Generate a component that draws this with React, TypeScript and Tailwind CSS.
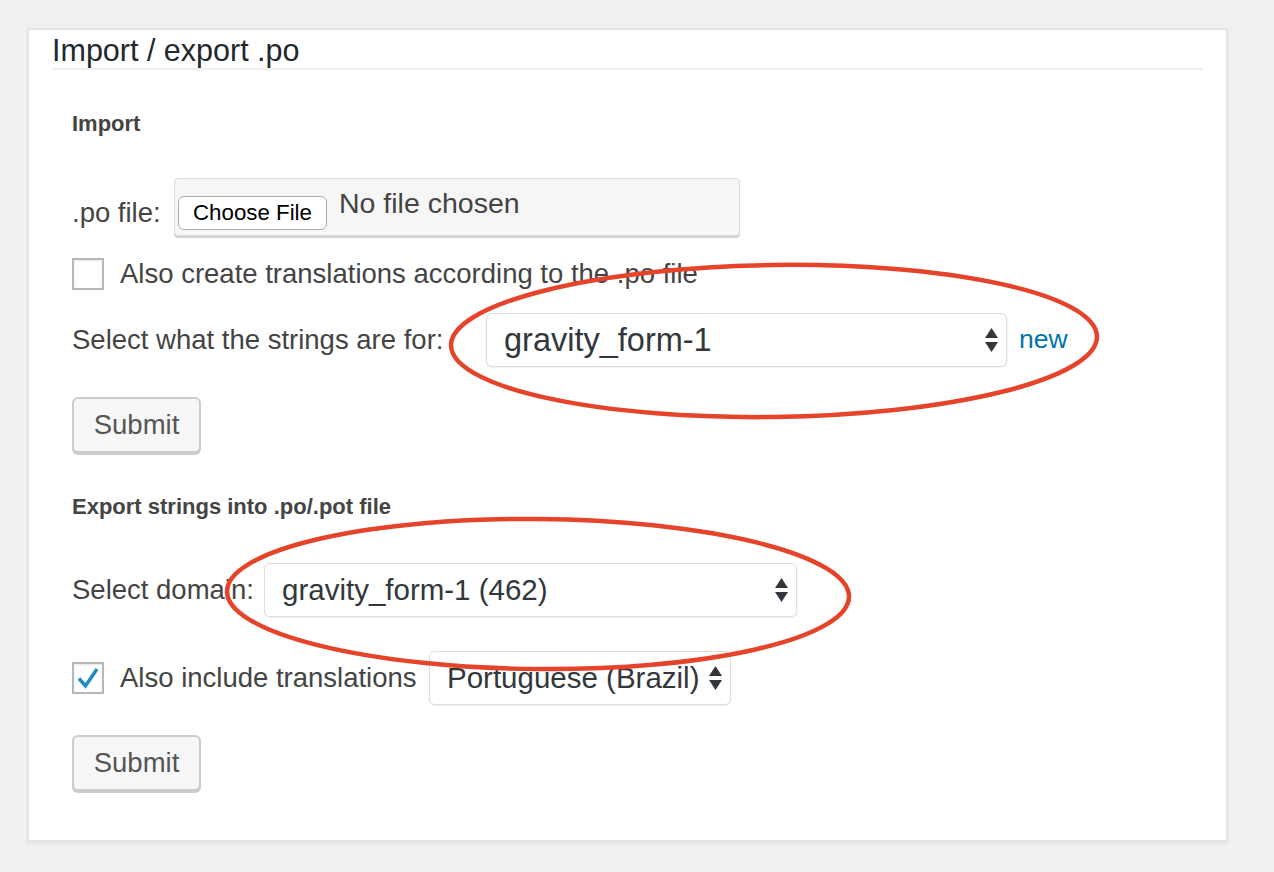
import React from 'react'

function Arrows() {
  return (
    <svg width="13" height="24" viewBox="0 0 13 24" className="shrink-0">
      <path d="M6.5 0 L13 10 L0 10 Z" fill="#32373c" />
      <path d="M0 14 L13 14 L6.5 24 Z" fill="#32373c" />
    </svg>
  )
}

function Select({ value, width, size }: { value: string; width: string; size: string }) {
  return (
    <div
      className={`flex h-[54px] ${width} items-center justify-between rounded-[6px] border border-[#dcdcdc] bg-white pl-[17px] pr-[8px] text-[#32373c] shadow-[0_1px_2px_rgba(0,0,0,0.07)] ${size}`}
    >
      <span>{value}</span>
      <Arrows />
    </div>
  )
}

function Checkbox({ checked }: { checked?: boolean }) {
  return (
    <div className="flex h-[32px] w-[32px] shrink-0 items-center justify-center border-2 border-[#b4b9be] bg-white shadow-[inset_0_1px_2px_rgba(0,0,0,0.1)]">
      {checked && (
        <svg width="24" height="24" viewBox="0 0 24 24">
          <path d="M3 12.5 L9.5 20 L21 3" fill="none" stroke="#1e8cbe" strokeWidth="3.5" strokeLinejoin="miter" />
        </svg>
      )}
    </div>
  )
}

function SubmitButton() {
  return (
    <button className="h-[56px] w-[129px] rounded-[6px] border-2 border-[#cccccc] bg-[#f7f7f7] text-[27.5px] text-[#555] shadow-[0_2px_0_#cccccc]">
      Submit
    </button>
  )
}

export default function App() {
  return (
    <div
      className="relative min-h-[872px] bg-[#f1f1f1] pl-[27px] pt-[28px]"
      style={{ fontFamily: '"Liberation Sans", Arial, sans-serif' }}
    >
      <div className="w-[1201px] border-2 border-[#e5e5e5] bg-white shadow-[0_2px_3px_rgba(0,0,0,0.05)]">
        <div className="mx-[23px] border-b-2 border-[#eeeeee] pt-[2px]">
          <h2 className="text-[30.5px] leading-[36px] text-[#23282d]">Import / export .po</h2>
        </div>

        <div className="flex flex-col pb-[49px] pl-[43px] text-[27.5px] text-[#444]">
          <h3 className="mt-[41px] text-[22px] font-bold leading-[26px] text-[#444]">Import</h3>

          <div className="mt-[41px] flex h-[58px] items-center">
            <span className="mt-[12px] w-[102px]">.po file:</span>
            <div className="flex h-[58px] w-[566px] items-start rounded-[4px] border border-[#dddddd] bg-[#f6f6f6] pl-[3px] shadow-[0_2px_0_#d2d2d2]">
              <div className="mt-[17px] flex h-[34px] w-[149px] items-center justify-center rounded-[6px] border border-[#a9a9a9] bg-white text-[22.3px] text-black">
                Choose File
              </div>
              <span className="ml-[12px] mt-[6px] text-[28.5px] leading-[36px] text-[#444]">No file chosen</span>
            </div>
          </div>

          <div className="mt-[22px] flex h-[32px] items-center">
            <Checkbox />
            <span className="ml-[16px]">Also create translations according to the .po file</span>
          </div>

          <div className="mt-[23px] flex items-center">
            <span className="w-[414px]">Select what the strings are for:</span>
            <Select value="gravity_form-1" width="w-[521px]" size="text-[32.5px]" />
            <a className="ml-[12px] text-[26.5px] text-[#0073aa]">new</a>
          </div>

          <div className="mt-[30px]">
            <SubmitButton />
          </div>

          <h3 className="mt-[41px] text-[22px] font-bold leading-[26px] text-[#444]">Export strings into .po/.pot file</h3>

          <div className="mt-[43px] flex items-center">
            <span className="w-[192px]">Select domain:</span>
            <Select value="gravity_form-1 (462)" width="w-[533px]" size="text-[29.5px]" />
          </div>

          <div className="mt-[34px] flex items-center">
            <Checkbox checked />
            <span className="ml-[16px] w-[309px]">Also include translations</span>
            <Select value="Portuguese (Brazil)" width="w-[302px]" size="text-[29.5px]" />
          </div>

          <div className="mt-[30px]">
            <SubmitButton />
          </div>
        </div>
      </div>

      <svg
        className="pointer-events-none absolute left-0 top-0"
        width="1274"
        height="872"
        viewBox="0 0 1274 872"
      >
        <ellipse cx="774" cy="341" rx="323" ry="76" fill="none" stroke="#e5432a" strokeWidth="4.5" transform="rotate(-0.8 774 341)" />
        <ellipse cx="538" cy="594" rx="311" ry="75" fill="none" stroke="#e5432a" strokeWidth="4.5" transform="rotate(0.5 538 594)" />
      </svg>
    </div>
  )
}
